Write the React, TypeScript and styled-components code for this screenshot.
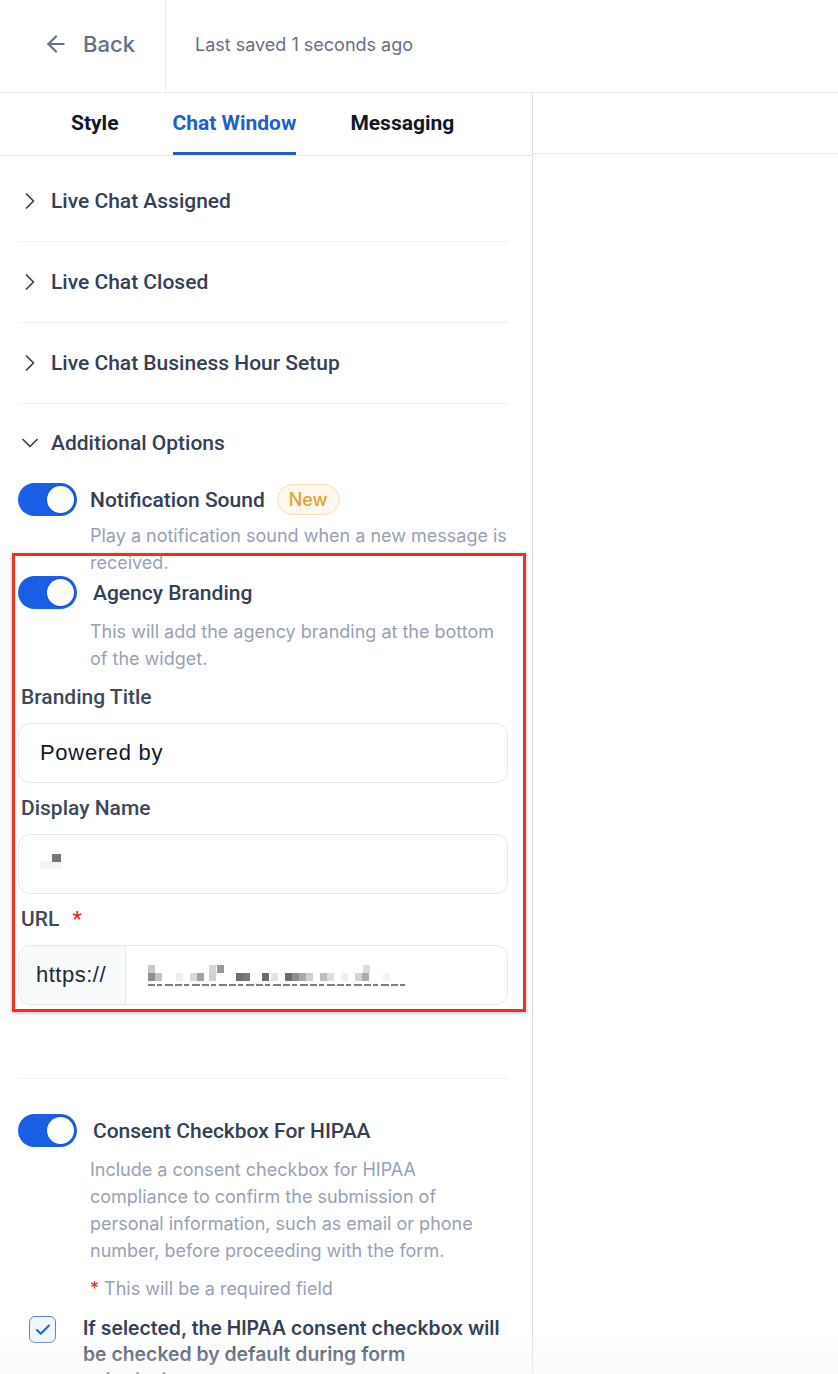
import React from 'react';
import styled, { createGlobalStyle } from 'styled-components';
import { ArrowLeft, ChevronRight, ChevronDown, Check } from 'lucide-react';

const GlobalStyle = createGlobalStyle`
    html, body {
        margin: 0;
        padding: 0;
        background: #ffffff;
        overflow: hidden;
    }
    body {
        font-family: Inter, 'Noto Sans', sans-serif;
        color: #344054;
    }
    * {
        box-sizing: border-box;
    }
`;

const sections = ['Live Chat Assigned', 'Live Chat Closed', 'Live Chat Business Hour Setup'];

// mosaic blocks that hide the url value: [x, y, shade]
const urlMosaic: [number, number, string][] = [
    [0, 0, '#c9c9c9'], [61, 0, '#d6d6d6'], [69, 0, '#9a9a9a'], [215, 0, '#dcdcdc'],
    [0, 8, '#8e8e8e'], [7, 8, '#c4c4c4'], [28, 8, '#efefef'], [42, 8, '#d9d9d9'], [49, 8, '#a3a3a3'],
    [61, 8, '#d0d0d0'], [88, 8, '#6e6e6e'], [95, 8, '#7a7a7a'], [114, 8, '#6a6a6a'], [123, 8, '#e3e3e3'],
    [137, 8, '#6c6c6c'], [144, 8, '#8c8c8c'], [151, 8, '#a9a9a9'], [158, 8, '#cfcfcf'], [172, 8, '#bdbdbd'],
    [179, 8, '#dedede'], [193, 8, '#efefef'], [207, 8, '#d4d4d4'], [214, 8, '#ababab'], [235, 8, '#f2f2f2'],
];

export default function App() {
    return (
        <>
            <GlobalStyle />
            <Page>
                <Header>
                    <BackButton>
                        <ArrowLeft size={26} strokeWidth={2} />
                        <span>Back</span>
                    </BackButton>
                    <SavedText>Last saved 1 seconds ago</SavedText>
                </Header>
                <Body>
                    <LeftPanel>
                        <Tabs>
                            <Tab>Style</Tab>
                            <Tab active>Chat Window</Tab>
                            <Tab>Messaging</Tab>
                        </Tabs>
                        <Content>
                            {sections.map((title) => (
                                <SectionRow key={title}>
                                    <ChevronRight size={28} strokeWidth={1.5} />
                                    <SectionTitle>{title}</SectionTitle>
                                </SectionRow>
                            ))}
                            <SectionRow open>
                                <ChevronDown size={28} strokeWidth={1.5} />
                                <SectionTitle>Additional Options</SectionTitle>
                            </SectionRow>

                            <OptionRow first>
                                <Toggle>
                                    <Knob />
                                </Toggle>
                                <OptionLabel>Notification Sound</OptionLabel>
                                <Badge>New</Badge>
                            </OptionRow>
                            <Description>Play a notification sound when a new message is received.</Description>

                            <OptionRow>
                                <Toggle>
                                    <Knob />
                                </Toggle>
                                <OptionLabel shift>Agency Branding</OptionLabel>
                            </OptionRow>
                            <Description spaced>This will add the agency branding at the bottom of the widget.</Description>

                            <FieldLabel>Branding Title</FieldLabel>
                            <Input>
                                <InputValue>Powered by</InputValue>
                            </Input>

                            <FieldLabel>Display Name</FieldLabel>
                            <Input>
                                <svg width="22" height="22" viewBox="0 0 22 22">
                                    <rect x="0" y="8" width="22" height="8" fill="#f5f5f5" />
                                    <rect x="12" y="1" width="9" height="8" fill="#777777" />
                                </svg>
                            </Input>

                            <FieldLabel>
                                URL <Required wide>*</Required>
                            </FieldLabel>
                            <Input flush>
                                <Prefix>https://</Prefix>
                                <UrlValue>
                                    <svg width="260" height="26" viewBox="0 0 260 26">
                                        {urlMosaic.map(([x, y, c], i) => (
                                            <rect key={i} x={x} y={y} width="7" height="8" fill={c} />
                                        ))}
                                        <line x1="0" y1="20" x2="258" y2="20" stroke="#555" strokeWidth="1.5" strokeDasharray="7 2 5 3 8 2" />
                                    </svg>
                                </UrlValue>
                            </Input>

                            <Divider />

                            <OptionRow>
                                <Toggle>
                                    <Knob />
                                </Toggle>
                                <OptionLabel shift>Consent Checkbox For HIPAA</OptionLabel>
                            </OptionRow>
                            <Description spaced narrow>
                                Include a consent checkbox for HIPAA compliance to confirm the submission of personal
                                information, such as email or phone number, before proceeding with the form.
                            </Description>
                            <RequiredNote>
                                <Required>*</Required> This will be a required field
                            </RequiredNote>
                            <CheckRow>
                                <CheckBox>
                                    <Check size={18} strokeWidth={2.6} />
                                </CheckBox>
                                <CheckText>
                                    If selected, the HIPAA consent checkbox will be checked by default during form submission.
                                </CheckText>
                            </CheckRow>

                            <Highlight />
                        </Content>
                    </LeftPanel>
                    <RightPanel>
                        <RightBar />
                    </RightPanel>
                </Body>
                <BottomFade />
            </Page>
        </>
    );
}

const Page = styled.div`
    position: relative;
    width: 838px;
    height: 1374px;
    overflow: hidden;
    display: flex;
    flex-direction: column;
`;

const Header = styled.header`
    height: 93px;
    display: flex;
    align-items: stretch;
    border-bottom: 1px solid #e9ebef;
    flex-shrink: 0;
`;

const BackButton = styled.div`
    width: 166px;
    display: flex;
    align-items: center;
    gap: 14px;
    padding: 0 0 4px 43px;
    border-right: 1px solid #e9ebef;
    color: #667085;
    font-size: 22px;
    font-weight: 500;
`;

const SavedText = styled.div`
    display: flex;
    align-items: center;
    padding: 0 0 4px 29px;
    font-size: 18px;
    color: #667085;
`;

const Body = styled.div`
    flex: 1;
    display: flex;
`;

const LeftPanel = styled.div`
    width: 533px;
    border-right: 1px solid #dcdfe4;
    display: flex;
    flex-direction: column;
`;

const Tabs = styled.nav`
    height: 63px;
    display: flex;
    align-items: stretch;
    gap: 54px;
    padding-left: 71px;
    border-bottom: 1px solid #e9ebef;
`;

const Tab = styled.div<{ active?: boolean }>`
    display: flex;
    align-items: center;
    font-family: Roboto, 'Liberation Sans', sans-serif;
    font-size: 21px;
    font-weight: 700;
    color: ${(p) => (p.active ? '#1f5fcc' : '#101828')};
    border-bottom: 3px solid ${(p) => (p.active ? '#1f5fcc' : 'transparent')};
    padding-top: 1px;
`;

const Content = styled.div`
    position: relative;
    padding: 5px 24px 0 18px;
    display: flex;
    flex-direction: column;
`;

const SectionRow = styled.div<{ open?: boolean }>`
    height: ${(p) => (p.open ? '78px' : '81px')};
    display: flex;
    align-items: center;
    gap: 7px;
    border-bottom: ${(p) => (p.open ? 'none' : '1px solid #eef0f3')};
    color: #344054;

    svg {
        margin-left: -2px;
        flex-shrink: 0;
    }
`;

const SectionTitle = styled.span`
    font-family: Roboto, 'Liberation Sans', sans-serif;
    font-size: 21px;
    font-weight: 500;
    color: #344054;
`;

const OptionRow = styled.div<{ first?: boolean }>`
    display: flex;
    align-items: center;
    height: 33px;
    margin-top: ${(p) => (p.first ? '1px' : '0')};
`;

const Toggle = styled.div`
    width: 59px;
    height: 33px;
    border-radius: 17px;
    background: #1a5ee6;
    padding: 3px;
    display: flex;
    justify-content: flex-end;
    flex-shrink: 0;
`;

const Knob = styled.div`
    width: 27px;
    height: 27px;
    border-radius: 50%;
    background: #ffffff;
    box-shadow: 0 0 0 1px rgba(20, 60, 160, 0.25);
`;

const OptionLabel = styled.span<{ shift?: boolean }>`
    margin-left: ${(p) => (p.shift ? '16px' : '13px')};
    font-family: Roboto, 'Liberation Sans', sans-serif;
    font-size: 21px;
    font-weight: 500;
    color: #344054;
`;

const Badge = styled.span`
    margin-left: 12px;
    height: 31px;
    padding: 0 11px;
    display: flex;
    align-items: center;
    border-radius: 16px;
    background: #fff8ec;
    border: 1px solid #f8ddb3;
    color: #e8a136;
    font-size: 18px;
    font-weight: 500;
`;

const Description = styled.p<{ spaced?: boolean; narrow?: boolean }>`
    margin: ${(p) => (p.spaced ? '9px' : '6px')} 0 0 72px;
    max-width: ${(p) => (p.narrow ? '390px' : 'none')};
    font-size: 18px;
    line-height: 27px;
    color: #98a2b3;
`;

const FieldLabel = styled.div`
    margin: 13px 0 0 3px;
    font-family: Roboto, 'Liberation Sans', sans-serif;
    font-size: 21px;
    font-weight: 500;
    line-height: 24px;
    color: #3d4858;
`;

const Required = styled.span<{ wide?: boolean }>`
    color: #d92d20;
    margin-left: ${(p) => (p.wide ? '8px' : '4px')};
`;

const Input = styled.div<{ flush?: boolean }>`
    margin-top: 14px;
    height: 60px;
    border: 1px solid #e4e7ec;
    border-radius: 12px;
    display: flex;
    align-items: center;
    padding-left: ${(p) => (p.flush ? '0' : '21px')};
    overflow: hidden;
`;

const InputValue = styled.span`
    font-family: 'Liberation Sans', Arial, sans-serif;
    font-size: 22px;
    letter-spacing: 0.7px;
    color: #101828;
`;

const Prefix = styled.div`
    width: 107px;
    height: 100%;
    display: flex;
    align-items: center;
    padding-left: 17px;
    background: #f9fafb;
    border-right: 1px solid #e4e7ec;
    font-family: 'Liberation Sans', Arial, sans-serif;
    font-size: 22px;
    letter-spacing: 0.5px;
    color: #1d2939;
`;

const UrlValue = styled.div`
    padding-left: 22px;
    padding-top: 6px;
    display: flex;
    align-items: center;
`;

const Divider = styled.hr`
    margin: 73px 0 35px 0;
    border: none;
    border-top: 1px solid #eef0f3;
    height: 0;
`;

const RequiredNote = styled.div`
    margin: 13px 0 0 68px;
    font-size: 18px;
    line-height: 24px;
    color: #98a2b3;
`;

const CheckRow = styled.div`
    display: flex;
    align-items: flex-start;
    gap: 27px;
    margin: 14px 0 0 11px;
`;

const CheckBox = styled.div`
    width: 27px;
    height: 27px;
    border-radius: 6px;
    border: 1.5px solid #5b82c9;
    background: #f0f5ff;
    color: #1f5fcc;
    display: flex;
    align-items: center;
    justify-content: center;
    flex-shrink: 0;
    margin-top: 1px;
`;

const CheckText = styled.div`
    font-family: Inter, 'Noto Sans', sans-serif;
    font-size: 19.4px;
    font-weight: 600;
    line-height: 26px;
    color: #344054;
`;

const Highlight = styled.div`
    position: absolute;
    left: 12px;
    top: 397px;
    width: 514px;
    height: 459px;
    border: 3px solid #ea3323;
    box-shadow: 0 1px 4px rgba(0, 0, 0, 0.25);
    pointer-events: none;
`;

const RightPanel = styled.div`
    flex: 1;
`;

const RightBar = styled.div`
    height: 61px;
    border-bottom: 1px solid #e9ebef;
`;

const BottomFade = styled.div`
    position: absolute;
    left: 0;
    right: 0;
    bottom: 0;
    height: 44px;
    background: linear-gradient(to bottom, rgba(255, 255, 255, 0), rgba(246, 247, 249, 0.55));
    pointer-events: none;
`;
